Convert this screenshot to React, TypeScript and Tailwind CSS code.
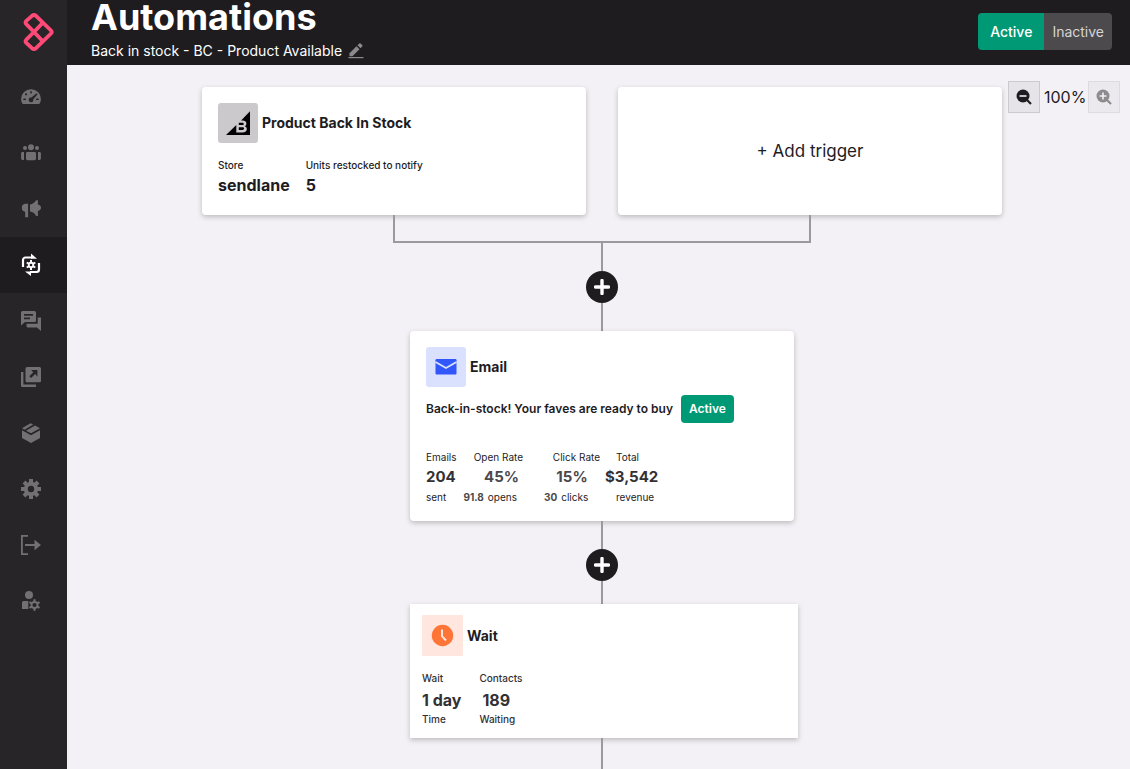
import type { ReactNode } from "react";

function Icon({ children }: { children: ReactNode }) {
  return (
    <svg viewBox="0 0 20 20" className="size-5 overflow-visible" fill="currentColor" aria-hidden="true">
      {children}
    </svg>
  );
}

const navItems: { label: string; active?: boolean; icon: ReactNode }[] = [
  {
    label: "Dashboard",
    icon: (
      <Icon>
        <path d="M10 2.2A9.9 9.9 0 0 0 .1 12.1c0 1.700.4 3.100 1 4.200.3.500.6.700 1.200.7h15.400c.6 0 .9-.2 1.200-.7.6-1.100 1-2.500 1-4.200A9.900 9.900 0 0 0 10 2.200Z" />
        <g className="fill-[#272528]">
          <rect x="2.2" y="11.6" width="2.8" height="1.5" rx=".7" />
          <rect x="15" y="11.6" width="2.8" height="1.5" rx=".7" />
          <rect x="9.3" y="4" width="1.5" height="2.6" rx=".7" />
          <circle cx="5" cy="7.3" r="1.1" />
          <path d="m15.600 6.200 1 1-4.400 5.200a2.300 2.300 0 1 1-1.800-1.800Z" />
        </g>
      </Icon>
    ),
  },
  {
    label: "Audience",
    icon: (
      <Icon>
        <circle cx="10" cy="4.2" r="3" />
        <circle cx="4" cy="5" r="2" />
        <circle cx="16" cy="5" r="2" />
        <rect x="5" y="9" width="10" height="8.2" rx="1.4" />
        <path d="M1.5 9H3v8H1.5A1.4 1.4 0 0 1 .1 15.6v-5.2A1.4 1.4 0 0 1 1.5 9ZM17 9h1.5a1.4 1.4 0 0 1 1.4 1.4v5.2a1.4 1.4 0 0 1-1.4 1.4H17Z" />
      </Icon>
    ),
  },
  {
    label: "Campaigns",
    icon: (
      <Icon>
        <path d="M4.2 4.8h2.9v13.5H4.2v-5.6A4 4 0 0 1 4.2 4.8Z" />
        <path d="M9 5.4c2.7-.4 4.8-1.8 6.2-4.2h1.7v4.3c2 .5 3.1 1.6 3.1 3.2s-1.1 2.8-3.1 3.2v5h-1.7C13.8 14.3 11.7 12.9 9 12.5Z" />
      </Icon>
    ),
  },
  {
    label: "Automations",
    active: true,
    icon: (
      <Icon>
        <path d="M2 12V5a2.500 2.500 0 0 1 2.500-2.500H11M18 8v6.500a2.500 2.500 0 0 1-2.500 2.500H9" fill="none" stroke="currentColor" strokeWidth="2.200" />
        <path d="m10-1.500 6 5.200h-6ZM10 21l-6-4.500h6Z" />
        <path d="M10 5v10M5.700 7.500l8.600 5M14.300 7.500l-8.600 5" stroke="currentColor" strokeWidth="2" />
        <circle cx="10" cy="10" r="3.200" />
        <circle cx="10" cy="10" r="1.300" className="fill-[#1e1c1f]" />
      </Icon>
    ),
  },
  {
    label: "Conversations",
    icon: (
      <Icon>
        <path fillRule="evenodd" d="M1.5 0h12A1.5 1.5 0 0 1 15 1.500v8a1.500 1.500 0 0 1-1.500 1.500H4L0 14.500v-13A1.500 1.500 0 0 1 1.500 0ZM3 3v1.700h9V3Zm0 3.500v1.700h6V6.500Z" />
        <path d="M16.700 6.500H20V20l-4-3.500H7A1.500 1.500 0 0 1 5.500 15v-2.200h11.200Z" />
      </Icon>
    ),
  },
  {
    label: "Forms",
    icon: (
      <Icon>
        <path d="M0 5h2.400v12.500H15V20H1.500A1.500 1.500 0 0 1 0 18.500Z" />
        <path fillRule="evenodd" d="M6 0h12.500A1.500 1.500 0 0 1 20 1.500v12.300a1.500 1.500 0 0 1-1.500 1.500H6a1.500 1.500 0 0 1-1.500-1.500V1.500A1.500 1.500 0 0 1 6 0Zm4 3 2.300 2.300-4 4 1.800 1.800 4-4L16.400 9.400V3Z" />
      </Icon>
    ),
  },
  {
    label: "Products",
    icon: (
      <Icon>
        <path d="M1 5.200 9.500.2l2.700 1.400-8.700 5.100ZM5 7.700l9-5.200 5 2.700-9 5.100Z" />
        <path d="m1 7.300 9 5 9-5v7.700l-9 5-9-5Z" />
      </Icon>
    ),
  },
  {
    label: "Settings",
    icon: (
      <Icon>
        <g stroke="currentColor" strokeWidth="4">
          <path d="M10 0v5M10 15v5M0 10h5M15 10h5M3 3l3.500 3.500M13.500 13.500 17 17M17 3l-3.500 3.500M6.500 13.500 3 17" />
        </g>
        <circle cx="10" cy="10" r="5.2" fill="none" stroke="currentColor" strokeWidth="4" />
      </Icon>
    ),
  },
  {
    label: "Log out",
    icon: (
      <Icon>
        <path d="M7 .9H.9v18.2H7M4 10h11" fill="none" stroke="currentColor" strokeWidth="1.8" />
        <path d="m13.500 4.800 6.500 5.200-6.500 5.200Z" />
      </Icon>
    ),
  },
  {
    label: "Account",
    icon: (
      <Icon>
        <circle cx="8" cy="4" r="4" />
        <path d="M2.500 10h4.800v8H1v-6.500A1.500 1.500 0 0 1 2.500 10Z" />
        <circle cx="13.5" cy="14" r="3" fill="none" stroke="currentColor" strokeWidth="1.8" />
        <path d="M13.500 8.300v2.200M13.500 17.500v2.200M8.500 11.100l2 1.200M16.500 15.700l2 1.200M18.500 11.100l-2 1.200M10.500 15.700l-2 1.200" stroke="currentColor" strokeWidth="2.2" />
      </Icon>
    ),
  },
];

function Sidebar() {
  return (
    <nav aria-label="Main" className="w-[67px] shrink-0 bg-[#272528]">
      <a href="#home" aria-label="Home" className="flex h-[69px] pt-3 pl-[23px]">
        <svg viewBox="0 0 31 40" className="h-10 w-[31px]" fill="none" stroke="#ff4a78" strokeWidth="3.8" strokeLinejoin="round" aria-hidden="true">
          <path d="M9 3.800q2-1.600 4 0l15 14.700q1.400 1.500 0 3L13 36.200q-2 1.600-4 0L3.300 30.900q-1.500-1.600 0-3.200L11 20 3.300 12.100q-1.500-1.600 0-3.200Z" />
          <path d="M19.800 10.700 11 20l8.800 9.300" />
        </svg>
      </a>
      <ul>
        {navItems.map((item) => (
          <li key={item.label}>
            <a
              href="#nav"
              aria-label={item.label}
              className={
                item.active
                  ? "flex h-14 items-center bg-[#1e1c1f] pl-[21px] text-white"
                  : "flex h-14 items-center pl-[21px] text-[#727073]"
              }
            >
              {item.icon}
            </a>
          </li>
        ))}
      </ul>
    </nav>
  );
}

function Header() {
  return (
    <header className="flex h-[65px] shrink-0 items-start justify-between bg-[#1e1c1f] pr-[18px] pl-6 text-white">
      <div>
        <h1 className="text-4xl leading-[34px] font-bold">Automations</h1>
        <div className="flex items-center gap-1.5 pt-[5px] text-sm leading-6">
          <span>Back in stock - BC - Product Available</span>
          <button aria-label="Rename automation" className="text-[#8b898c]">
            <svg viewBox="0 0 16 16" className="size-4" fill="currentColor" aria-hidden="true">
              <path d="M1.500 10.200 8.500 3.200l3 3-7 7h-3Z" />
              <path d="m9.500 2.200 1.700-1.700a1 1 0 0 1 1.400 0l1.600 1.600a1 1 0 0 1 0 1.400l-1.700 1.700Z" />
              <path d="M.5 14h15v1.200H.5Z" />
            </svg>
          </button>
        </div>
      </div>
      <div className="mt-[13px] flex h-[37px] overflow-hidden rounded text-sm">
        <button className="bg-[#009975] px-3 font-medium">Active</button>
        <button className="bg-[#4c4a4d] px-2 text-[#d5d4d6]">Inactive</button>
      </div>
    </header>
  );
}

function ZoomIcon({ plus }: { plus?: boolean }) {
  return (
    <svg viewBox="0 0 16 16" className="size-4" aria-hidden="true">
      <circle cx="7" cy="7" r="6.5" fill="currentColor" />
      <path d="m11 11 4 4" stroke="currentColor" strokeWidth="2.2" />
      <path d={plus ? "M3.500 7h7M7 3.500v7" : "M3.500 7h7"} stroke="#f1f0f3" strokeWidth="1.6" />
    </svg>
  );
}

function ZoomControls() {
  return (
    <div className="absolute top-4 right-[10px] flex items-center gap-1 text-[#1e1c1f]">
      <button aria-label="Zoom out" className="flex size-8 items-center justify-center border border-[#cccacd] bg-[#e6e4e8]">
        <ZoomIcon />
      </button>
      <span className="w-10 text-center text-base whitespace-nowrap">100%</span>
      <button aria-label="Zoom in" disabled className="flex size-8 items-center justify-center border border-[#dddbdf] bg-[#ebe9ed] text-[#8d8b8e]">
        <ZoomIcon plus />
      </button>
    </div>
  );
}

function Line({ className }: { className: string }) {
  return <div className={`w-0.5 shrink-0 bg-[#9b999c] ${className}`} />;
}

function AddStep() {
  return (
    <button aria-label="Add step" className="flex size-8 shrink-0 items-center justify-center rounded-full bg-[#1e1c1f]">
      <svg viewBox="0 0 16 16" className="size-4" stroke="#fff" strokeWidth="3.4" strokeLinecap="round" aria-hidden="true">
        <path d="M8 1.500v13M1.500 8h13" />
      </svg>
    </button>
  );
}

const card = "shrink-0 bg-white shadow-[0_2px_5px_rgba(30,28,31,0.25)]";
const label = "text-[10px] leading-4";
const value = "text-base leading-6 font-bold";
const stat = "text-[15px] leading-6 font-bold";

function TriggerCard() {
  return (
    <section className={`${card} h-32 w-96 rounded p-4`}>
      <div className="flex items-center gap-1">
        <svg viewBox="0 0 40 40" className="size-10" aria-hidden="true">
          <rect width="40" height="40" rx="3" fill="#cbc9cc" />
          <path d="M32 8.300V32H8l10.300-10v7.500h6.200c2.800 0 4.300-1.400 4.300-3.500 0-1.400-.8-2.400-2-2.800 1-.5 1.600-1.300 1.600-2.500 0-2-1.500-3.200-4-3.200h-1.300Z" fill="#000" />
          <path d="M20.800 19.700h3.400c1 0 1.500.4 1.500 1.200s-.5 1.200-1.500 1.200h-3.400ZM20.800 24.200h3.600c1.100 0 1.700.5 1.700 1.400s-.6 1.400-1.700 1.400h-3.600Z" fill="#000" />
        </svg>
        <h2 className="text-sm font-bold">Product Back In Stock</h2>
      </div>
      <dl className="flex gap-4 pt-[14px]">
        <div>
          <dt className={`${label} font-medium`}>Store</dt>
          <dd className={value}>sendlane</dd>
        </div>
        <div>
          <dt className={`${label} font-medium`}>Units restocked to notify</dt>
          <dd className={value}>5</dd>
        </div>
      </dl>
    </section>
  );
}

function EmailCard() {
  return (
    <section className={`${card} h-[190px] w-96 rounded p-4`}>
      <div className="flex items-center gap-1">
        <svg viewBox="0 0 40 40" className="size-10" aria-hidden="true">
          <rect width="40" height="40" rx="3" fill="#dae1ff" />
          <rect x="9.5" y="12" width="21" height="15.5" rx="1.2" fill="#3157fb" />
          <path d="m9.500 15 10.500 6 10.500-6" fill="none" stroke="#dae1ff" strokeWidth="1.8" />
        </svg>
        <h2 className="text-sm font-bold">Email</h2>
      </div>
      <div className="flex items-center gap-2 pt-2">
        <p className="text-xs font-semibold">Back-in-stock! Your faves are ready to buy</p>
        <span className="rounded bg-[#009975] px-2 text-xs leading-7 font-semibold text-white">Active</span>
      </div>
      <div className="flex pt-[26px]">
        <div className="w-[37px]">
          <p className={label}>Emails</p>
          <p className={`${stat} text-[#333134]`}>204</p>
          <p className={label}>sent</p>
        </div>
        <div className="flex w-[60px] flex-col items-end">
          <p className={label}>Open Rate</p>
          <p className={`${stat} pr-1 text-[#4b494c]`}>45%</p>
          <p className={`${label} pr-1.5`}>
            <b className="pr-1 text-[#4b494c]">91.8</b>opens
          </p>
        </div>
        <div className="ml-[21px] w-14">
          <p className={`${label} text-right`}>Click Rate</p>
          <p className={`${stat} text-center text-[#4b494c]`}>15%</p>
          <p className={label}>
            <b className="pr-1 text-[#4b494c]">30</b>clicks
          </p>
        </div>
        <div className="ml-[5px]">
          <p className={`${label} pl-[11px]`}>Total</p>
          <p className={`${stat} text-[#333134]`}>$3,542</p>
          <p className={`${label} pl-[11px]`}>revenue</p>
        </div>
      </div>
    </section>
  );
}

function WaitCard() {
  return (
    <section className={`${card} ml-1 h-[134px] w-[388px] px-3 pt-[11px]`}>
      <div className="flex items-center gap-1">
        <svg viewBox="0 0 41 41" className="size-[41px]" aria-hidden="true">
          <rect width="41" height="41" rx="1" fill="#ffe7df" />
          <circle cx="20.5" cy="20.5" r="10.7" fill="#ff7537" />
          <path d="M20 14.500v6.700l4 4.300" fill="none" stroke="#ffe7df" strokeWidth="2" />
        </svg>
        <h2 className="text-sm font-bold">Wait</h2>
      </div>
      <div className="flex gap-[18px] pt-[14px] text-[#333134]">
        <div>
          <p className={`${label} font-medium`}>Wait</p>
          <p className={`${value} -mb-px pt-0.5`}>1 day</p>
          <p className={`${label} font-medium`}>Time</p>
        </div>
        <div>
          <p className={`${label} font-medium`}>Contacts</p>
          <p className={`${value} -mb-px pt-0.5 pl-[3px]`}>189</p>
          <p className={`${label} font-medium`}>Waiting</p>
        </div>
      </div>
    </section>
  );
}

export default function App() {
  return (
    <div className="flex h-screen overflow-hidden bg-[#f3f1f5] font-['Inter',sans-serif] text-[#1e1c1f]">
      <Sidebar />
      <div className="flex min-w-0 flex-1 flex-col">
        <Header />
        <main className="relative flex min-h-0 flex-1 flex-col items-center overflow-hidden pt-[22px] pl-[7px]">
          <div className="flex shrink-0 gap-8">
            <TriggerCard />
            <button className={`${card} w-96 rounded pt-0.5 text-[17px]`}>+ Add trigger</button>
          </div>
          <div className="h-7 w-[418px] shrink-0 border-x-2 border-b-2 border-[#9b999c]" />
          <Line className="h-7" />
          <AddStep />
          <Line className="h-7" />
          <EmailCard />
          <Line className="h-7" />
          <AddStep />
          <Line className="h-[23px]" />
          <WaitCard />
          <Line className="flex-1" />
          <ZoomControls />
        </main>
      </div>
    </div>
  );
}
